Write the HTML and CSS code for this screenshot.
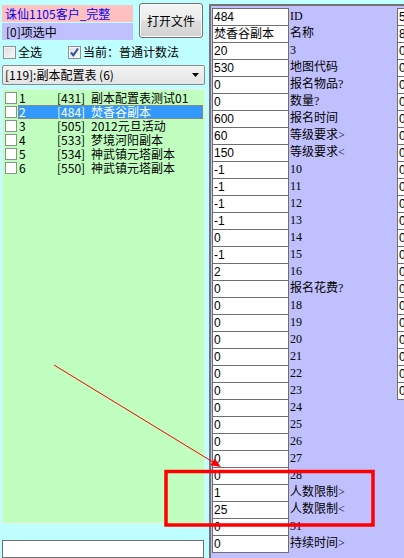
FILE: index.html
```html
<!DOCTYPE html>
<html lang="zh">
<head>
<meta charset="utf-8">
<title>诛仙1105客户_完整</title>
<link rel="stylesheet" href="styles.css">
</head>
<body>
<div class="app">
  <div class="left">
    <div class="header">
      <div class="labels">
        <div class="title">诛仙1105客户_完整</div>
        <div class="count">[0]项选中</div>
      </div>
      <button class="btn">打开文件</button>
    </div>
    <div class="checks">
      <span class="chk"><span class="cb"></span>全选</span>
      <span class="chk chk2"><span class="cb"><svg width="11" height="11" viewBox="0 0 11 11"><path d="M2 5.5 L4.3 8.3 L9 1.5" fill="none" stroke="#2a4f9f" stroke-width="2"/></svg></span>当前：普通计数法</span>
    </div>
    <div class="combo"><span class="combo-text">[119]:副本配置表 (6)</span><svg class="arrow" width="8" height="4" viewBox="0 0 8 4"><path d="M0 0 H7 L3.5 4 Z" fill="#000"/></svg></div>
    <div class="list">
      <div class="item"><span class="lcb"></span><span class="lbl"><span class="n">1</span><span class="id">[431]</span><span class="nm">副本配置表测试01</span></span></div>
      <div class="item sel"><span class="lcb"></span><span class="lbl"><span class="n">2</span><span class="id">[484]</span><span class="nm">焚香谷副本</span></span></div>
      <div class="item"><span class="lcb"></span><span class="lbl"><span class="n">3</span><span class="id">[505]</span><span class="nm">2012元旦活动</span></span></div>
      <div class="item"><span class="lcb"></span><span class="lbl"><span class="n">4</span><span class="id">[533]</span><span class="nm">梦境河阳副本</span></span></div>
      <div class="item"><span class="lcb"></span><span class="lbl"><span class="n">5</span><span class="id">[534]</span><span class="nm">神武镇元塔副本</span></span></div>
      <div class="item"><span class="lcb"></span><span class="lbl"><span class="n">6</span><span class="id">[550]</span><span class="nm">神武镇元塔副本</span></span></div>
    </div>
    <div class="input"></div>
  </div>
  <div class="right">
    <div class="row"><div class="v">484</div><div class="lab">ID</div><div class="v2">5</div></div>
    <div class="row"><div class="v">焚香谷副本</div><div class="lab">名称</div><div class="v2">8</div></div>
    <div class="row"><div class="v">20</div><div class="lab">3</div><div class="v2">0</div></div>
    <div class="row"><div class="v">530</div><div class="lab">地图代码</div><div class="v2">0</div></div>
    <div class="row"><div class="v">0</div><div class="lab">报名物品?</div><div class="v2">0</div></div>
    <div class="row"><div class="v">0</div><div class="lab">数量?</div><div class="v2">0</div></div>
    <div class="row"><div class="v">600</div><div class="lab">报名时间</div><div class="v2">0</div></div>
    <div class="row"><div class="v">60</div><div class="lab">等级要求&gt;</div><div class="v2">0</div></div>
    <div class="row"><div class="v">150</div><div class="lab">等级要求&lt;</div><div class="v2">0</div></div>
    <div class="row"><div class="v">-1</div><div class="lab">10</div><div class="v2">0</div></div>
    <div class="row"><div class="v">-1</div><div class="lab">11</div><div class="v2">0</div></div>
    <div class="row"><div class="v">-1</div><div class="lab">12</div><div class="v2">0</div></div>
    <div class="row"><div class="v">-1</div><div class="lab">13</div><div class="v2">0</div></div>
    <div class="row"><div class="v">0</div><div class="lab">14</div><div class="v2">0</div></div>
    <div class="row"><div class="v">-1</div><div class="lab">15</div><div class="v2">0</div></div>
    <div class="row"><div class="v">2</div><div class="lab">16</div><div class="v2">0</div></div>
    <div class="row"><div class="v">0</div><div class="lab">报名花费?</div><div class="v2">0</div></div>
    <div class="row"><div class="v">0</div><div class="lab">18</div><div class="v2">0</div></div>
    <div class="row"><div class="v">0</div><div class="lab">19</div><div class="v2">0</div></div>
    <div class="row"><div class="v">0</div><div class="lab">20</div><div class="v2">0</div></div>
    <div class="row"><div class="v">0</div><div class="lab">21</div><div class="v2">0</div></div>
    <div class="row"><div class="v">0</div><div class="lab">22</div><div class="v2">0</div></div>
    <div class="row"><div class="v">0</div><div class="lab">23</div><div class="v2">0</div></div>
    <div class="row"><div class="v">0</div><div class="lab">24</div></div>
    <div class="row"><div class="v">0</div><div class="lab">25</div></div>
    <div class="row"><div class="v">0</div><div class="lab">26</div></div>
    <div class="row"><div class="v">0</div><div class="lab">27</div></div>
    <div class="row"><div class="v">0</div><div class="lab">28</div></div>
    <div class="row"><div class="v">1</div><div class="lab">人数限制&gt;</div></div>
    <div class="row"><div class="v">25</div><div class="lab">人数限制&lt;</div></div>
    <div class="row"><div class="v">0</div><div class="lab">31</div></div>
    <div class="row"><div class="v">0</div><div class="lab">持续时间&gt;</div></div>
  </div>
</div>
<svg class="overlay" width="404" height="558" viewBox="0 0 404 558">
  <line x1="54" y1="365" x2="212.5" y2="461.8" stroke="#ff0000" stroke-width="1"/>
  <polygon points="221,467 210.4,465.2 214.6,458.4" fill="#ff0000"/>
  <rect x="166" y="471.5" width="207" height="53.5" fill="none" stroke="#ff0000" stroke-width="3.5"/>
</svg>
</body>
</html>
```
FILE: styles.css
```css
* { box-sizing: border-box; margin: 0; padding: 0; }
html, body { width: 404px; height: 558px; overflow: hidden; }
body {
  background: #c0ffff;
  font: 12px/14px "Noto Sans CJK SC", "Noto Sans", sans-serif;
  color: #000;
  position: relative;
}
.app { display: flex; height: 558px; }

.left {
  width: 209px;
  flex: none;
  display: flex;
  flex-direction: column;
  padding-left: 2px;
}
.header { display: flex; align-items: flex-start; padding-top: 3px; gap: 6px; }
.labels { width: 131px; margin-top: 2px; display: flex; flex-direction: column; gap: 1px; }
.title { height: 17px; line-height: 17px; background: #ffc0c0; color: #0000ff; padding-left: 3px; white-space: nowrap; }
.count { height: 17px; line-height: 17px; background: #c0c0ff; padding-left: 4px; }
.btn {
  width: 64px; height: 35px;
  border: 1px solid #707070; border-radius: 3px;
  background: linear-gradient(#f4f4f4 0%, #ececec 48%, #dedede 52%, #d2d2d2 100%);
  box-shadow: inset 0 0 0 1px #fbfbfb;
  font: 12px "Noto Sans CJK SC", sans-serif; color: #000;
}

.checks { display: flex; align-items: center; height: 14px; margin-top: 5px; padding-left: 1px; }
.chk { display: flex; align-items: center; gap: 2px; line-height: 14px; }
.chk2 { margin-left: 26px; }
.cb {
  width: 13px; height: 13px;
  border: 1px solid #8e8f8f;
  background: linear-gradient(135deg, #dcdcdc, #fbfbfb);
  box-shadow: inset 0 0 0 1px #f4f4f4;
  display: flex; align-items: center; justify-content: center;
}

.combo {
  width: 203px; height: 20px; margin-top: 6px;
  border: 1px solid #8a8a8a; border-radius: 2px;
  background: linear-gradient(#f4f4f4, #e4e4e4);
  display: flex; align-items: center; justify-content: space-between;
  padding: 0 4px 0 2px;
}
.combo-text { line-height: 18px; }
.arrow { display: block; }

.list {
  width: 203px; flex: 1; margin-top: 4px;
  background: #c0ffc0;
  border: 1px solid #e6f0e6;
  padding-top: 1px;
}
.item { display: flex; height: 14px; line-height: 14px; white-space: nowrap; }
.lcb { width: 12px; height: 12px; margin: 1px 0 0 2px; border: 1px solid #8e8f8f; background: #fff; flex: none; }
.lbl { display: flex; flex: 1; margin-left: 1px; padding-left: 1px; margin-right: 1px; }
.n { width: 38px; }
.id { width: 34px; }
.sel .lbl { background: #3399ff; color: #fff; outline: 1px dotted #d07a20; outline-offset: -1px; }

.input { width: 202px; height: 18px; margin-top: 16px; background: #fff; border: 1px solid #6e6e6e; flex: none; }

.right {
  flex: 1;
  margin-top: 4px;
  background: #c0c0ff;
  border-top: 2px solid #737373;
  border-left: 2px solid #737373;
  padding: 2px 0 0 1px;
}
.row { display: flex; height: 17px; }
.v, .v2 {
  height: 18px;
  border: 1px solid #6e6e6e;
  background: #fff;
  padding-left: 1px;
  line-height: 16px;
  font-family: "Liberation Sans", "Noto Sans CJK SC", sans-serif;
  white-space: nowrap; overflow: hidden;
}
.v { width: 77px; flex: none; }
.lab {
  width: 108px; flex: none; padding-left: 1px;
  line-height: 17px;
  font-family: "Liberation Serif", "Noto Sans CJK SC", serif;
  white-space: nowrap;
}
.v2 { width: 20px; flex: none; }

.overlay { position: absolute; left: 0; top: 0; pointer-events: none; }
```
